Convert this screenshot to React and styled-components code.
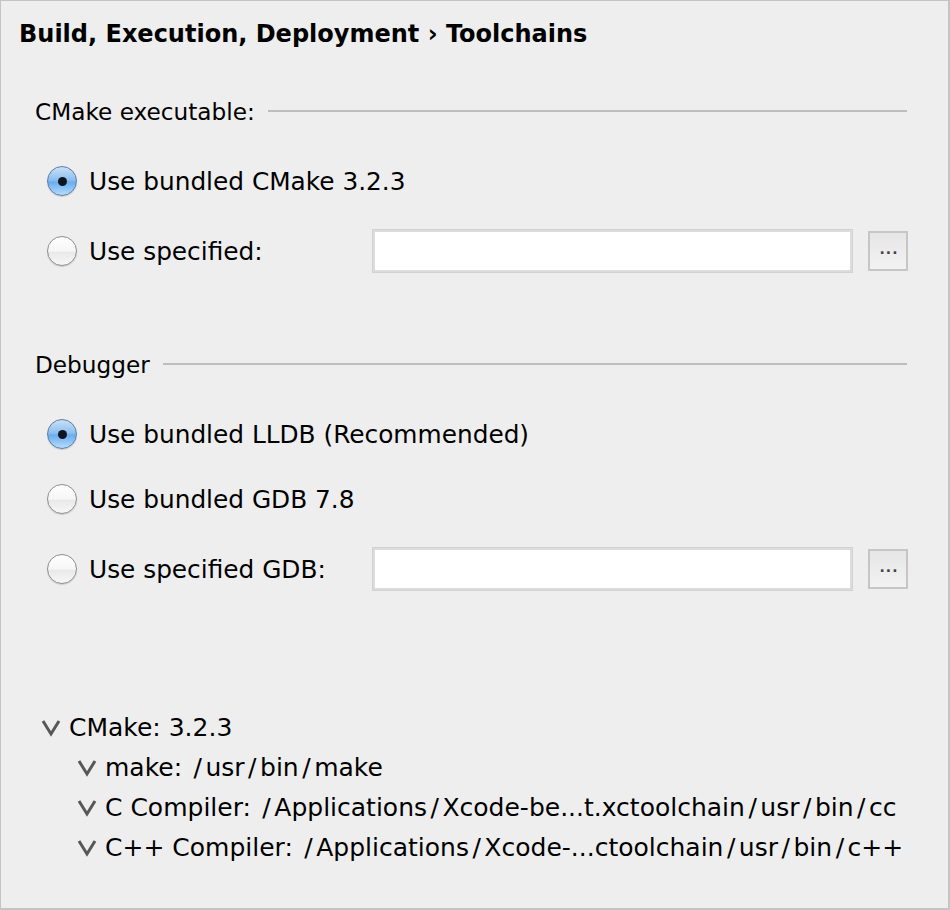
import React from "react";
import styled, { createGlobalStyle } from "styled-components";

const COLORS = {
  bg: "#eeeeee",
  frame: "#c4c4c4",
  line: "#bdbdbd",
  text: "#000000",
  chevron: "#575757",
};

const GlobalStyle = createGlobalStyle`
  html, body {
    margin: 0;
    padding: 0;
    background: ${COLORS.bg};
  }
  * {
    box-sizing: border-box;
  }
`;

const Frame = styled.div`
  width: 950px;
  height: 910px;
  background: ${COLORS.bg};
  border: 1px solid ${COLORS.frame};
  border-right-width: 2px;
  border-bottom-width: 2px;
  padding: 13px 41px 0 18px;
  font-family: "DejaVu Sans", "Liberation Sans", sans-serif;
  color: ${COLORS.text};
  display: flex;
  flex-direction: column;
`;

const Title = styled.h1`
  margin: 0;
  height: 40px;
  line-height: 40px;
  font-size: 24px;
  font-weight: bold;
  white-space: nowrap;
`;

const Section = styled.div`
  display: flex;
  flex-direction: column;
  margin-top: ${(p) => p.$top}px;
`;

const Legend = styled.div`
  display: flex;
  align-items: center;
  gap: 13px;
  height: 24px;
  padding-left: 16px;
  font-size: 23.2px;
  white-space: nowrap;

  &::after {
    content: "";
    flex: 1;
    height: 2px;
    background: ${COLORS.line};
  }
`;

const Options = styled.div`
  display: flex;
  flex-direction: column;
  gap: 29px;
  margin-top: 40px;
`;

const Row = styled.label`
  display: flex;
  align-items: center;
  height: ${(p) => (p.$withPath ? 46 : 36)}px;
  padding-left: 28px;
  font-size: 24.8px;
  white-space: nowrap;
`;

const Radio = styled.span`
  position: relative;
  flex: 0 0 30px;
  width: 30px;
  height: 30px;
  border-radius: 50%;
  margin-right: 12px;
  border: 1px solid ${(p) => (p.$checked ? "#5b7fa6" : "#8e8e8e")};
  background: ${(p) =>
    p.$checked
      ? "linear-gradient(#c9e0f7 0%, #8fc0f0 45%, #6aaef0 55%, #b6dcfb 100%)"
      : "linear-gradient(#ffffff 0%, #f6f6f6 50%, #e9e9e9 55%, #f7f7f7 100%)"};
  box-shadow: 0 1px 1px rgba(0, 0, 0, 0.15);

  &::after {
    content: "";
    display: ${(p) => (p.$checked ? "block" : "none")};
    position: absolute;
    left: 50%;
    top: 50%;
    width: 9px;
    height: 9px;
    margin: -4.5px 0 0 -4.5px;
    border-radius: 50%;
    background: #0d1620;
  }
`;

const LabelText = styled.span`
  flex: ${(p) => (p.$withPath ? "0 0 283px" : "0 1 auto")};
`;

const PathField = styled.input`
  flex: 0 0 481px;
  height: 44px;
  border: 3px solid #dcdcdc;
  outline: 1px solid #d2d2d2;
  outline-offset: -1px;
  background: #ffffff;
  font: inherit;
`;

const BrowseButton = styled.button`
  flex: 0 0 40px;
  height: 40px;
  margin-left: 15px;
  border: 2px solid #c6c6c6;
  background: linear-gradient(#e6e6e6, #f2f2f2);
  color: #444;
  font-family: "DejaVu Sans", sans-serif;
  font-size: 14px;
  font-weight: bold;
  letter-spacing: 1px;
  padding: 0 0 4px 2px;
  cursor: pointer;
`;

const Tree = styled.ul`
  list-style: none;
  margin: 115px 0 0 0;
  padding: 0;
  font-size: 25px;
`;

const TreeRow = styled.li`
  display: flex;
  align-items: center;
  height: 40px;
  padding-left: ${(p) => 22 + p.$depth * 36}px;
  white-space: nowrap;
`;

const TreeLabel = styled.span`
  white-space: pre;
`;

const Slash = styled.span`
  margin: 0 3.5px;
`;

const ChevronBox = styled.svg`
  flex: 0 0 20px;
  width: 20px;
  height: 18px;
  margin-right: 8px;
  margin-top: 1px;
`;

const Chevron = () => (
  <ChevronBox viewBox="0 0 20 18">
    <polyline
      points="2,2 10,15 18,2"
      fill="none"
      stroke={COLORS.chevron}
      strokeWidth="3"
    />
  </ChevronBox>
);

// paths get the wide slash spacing of the original font
const PathText = ({ text }) => (
  <TreeLabel>
    {text.split("/").map((part, i) => (
      <React.Fragment key={i}>
        {i > 0 && <Slash>/</Slash>}
        {part}
      </React.Fragment>
    ))}
  </TreeLabel>
);

const OptionRow = ({ checked, label, withPath }) => (
  <Row $withPath={withPath}>
    <Radio $checked={checked} />
    <LabelText $withPath={withPath}>{label}</LabelText>
    {withPath && (
      <>
        <PathField type="text" readOnly value="" />
        <BrowseButton type="button">...</BrowseButton>
      </>
    )}
  </Row>
);

const treeItems = [
  { depth: 0, text: "CMake: 3.2.3" },
  { depth: 1, text: "make: /usr/bin/make" },
  {
    depth: 1,
    text: "C Compiler: /Applications/Xcode-be...t.xctoolchain/usr/bin/cc",
  },
  {
    depth: 1,
    text: "C++ Compiler: /Applications/Xcode-...ctoolchain/usr/bin/c++",
  },
];

const App = () => {
  return (
    <>
      <GlobalStyle />
      <Frame>
        <Title>Build, Execution, Deployment › Toolchains</Title>

        <Section $top={45}>
          <Legend>CMake executable:</Legend>
          <Options>
            <OptionRow checked label="Use bundled CMake 3.2.3" />
            <OptionRow label="Use specified:" withPath />
          </Options>
        </Section>

        <Section $top={78}>
          <Legend>Debugger</Legend>
          <Options>
            <OptionRow checked label="Use bundled LLDB (Recommended)" />
            <OptionRow label="Use bundled GDB 7.8" />
            <OptionRow label="Use specified GDB:" withPath />
          </Options>
        </Section>

        <Tree>
          {treeItems.map((item) => (
            <TreeRow key={item.text} $depth={item.depth}>
              <Chevron />
              <PathText text={item.text} />
            </TreeRow>
          ))}
        </Tree>
      </Frame>
    </>
  );
};

export default App;
